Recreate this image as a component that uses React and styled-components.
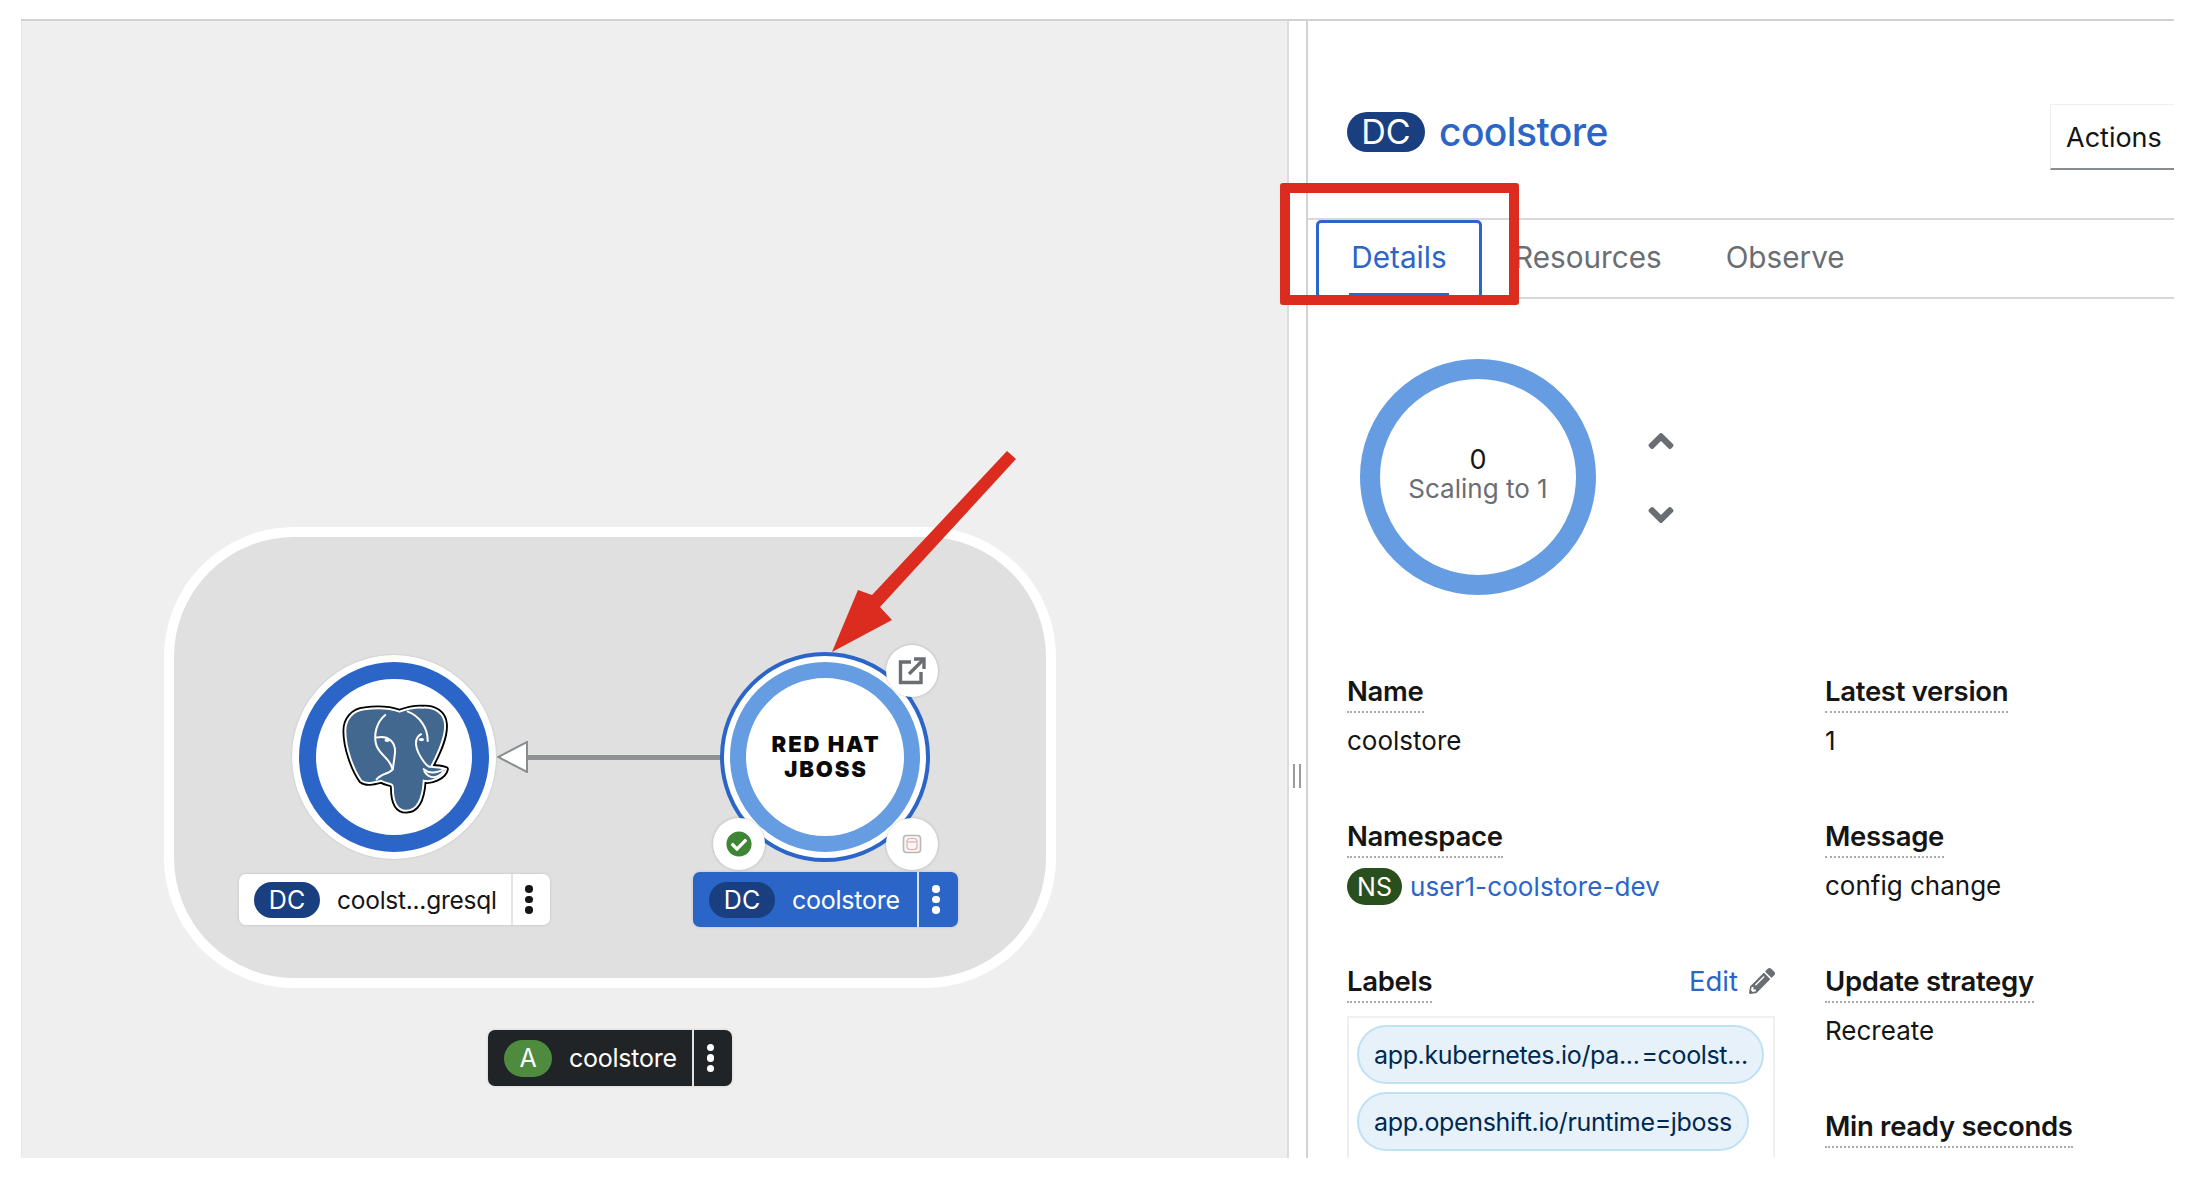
import React from "react";
import styled, { createGlobalStyle } from "styled-components";
import { FaCheckCircle, FaPencilAlt, FaAngleUp, FaAngleDown } from "react-icons/fa";

const Global = createGlobalStyle`
  html, body { margin: 0; padding: 0; background: #fff; }
  body { font-family: "Inter", "Liberation Sans", sans-serif; color: #151515; }
`;

const Page = styled.div`width: 2200px; height: 1186px; padding: 19px 26px 28px 21px; box-sizing: border-box; position: relative; overflow: hidden;`;
const Frame = styled.div`display: flex; height: 1139px; border-top: 2px solid #d2d2d2; overflow: hidden; box-sizing: border-box;`;
const Canvas = styled.div`width: 1268px; flex: none; background: #efefef; position: relative; border-left: 1px solid #e8e8e8; border-right: 2px solid #dcdcdc; box-sizing: border-box;`;
const Group = styled.div`position: absolute; left: 142px; top: 506px; width: 892px; height: 461px; box-sizing: border-box; background: #e0e0e0; border: 10px solid #fff; border-radius: 130px;`;
const NodeCircle = styled.div`position: absolute; border-radius: 50%; box-sizing: border-box; background: #fff; display: flex; align-items: center; justify-content: center; box-shadow: 0 0 2px rgba(0,0,0,.18);`;
const PgNode = styled(NodeCircle)`left: 270px; top: 634px; width: 204px; height: 204px;`;
const PgRing = styled.div`width: 190px; height: 190px; border-radius: 50%; border: 17px solid #2b65c7; box-sizing: border-box; display: flex; align-items: center; justify-content: center;`;
const JbNode = styled(NodeCircle)`left: 698px; top: 631px; width: 210px; height: 210px; border: 4px solid #2b65c7; box-shadow: none;`;
const JbRing = styled.div`width: 190px; height: 190px; border-radius: 50%; border: 16px solid #659ce2; box-sizing: border-box; display: flex; align-items: center; justify-content: center; text-align: center;`;
const JbText = styled.div`font-family: "Inter", sans-serif; font-weight: 900; font-size: 22px; line-height: 25px; letter-spacing: 1.9px; color: #0a0a0a; margin: -1px 0 0 2px;`;
const Decorator = styled.div`position: absolute; left: ${p => p.$x}px; top: ${p => p.$y}px; width: 52px; height: 52px; border-radius: 50%; background: #fff; box-shadow: 0 0 3px rgba(0,0,0,.22); display: flex; align-items: center; justify-content: center;`;
const Edge = styled.div`position: absolute; left: 505px; top: 734px; width: 194px; height: 5px; background: #8f9195;`;
const EdgeHead = styled.svg`position: absolute; left: 475px; top: 720px;`;

const NodeLabel = styled.div`position: absolute; left: ${p => p.$x}px; top: ${p => p.$y}px; width: ${p => p.$w}px; height: ${p => p.$h}px; box-sizing: border-box; display: flex; align-items: center; border-radius: 7px; background: ${p => p.$bg}; color: ${p => p.$fg}; box-shadow: 0 0 3px rgba(0,0,0,.15); overflow: hidden;`;
const Badge = styled.span`flex: none; display: flex; align-items: center; justify-content: center; color: #fff; border-radius: 22px; background: ${p => p.$bg || "#1a3f80"}; width: ${p => p.$w || 66}px; height: ${p => p.$h || 36}px; font-size: ${p => p.$fs || 25}px; margin-left: ${p => p.$ml || 15}px; font-weight: 400;`;
const LabelText = styled.span`flex: 1; font-size: ${p => p.$fs || 25}px; margin-left: 17px; white-space: nowrap; letter-spacing: -0.25px;`;
const Kebab = styled.span`flex: none; width: ${p => p.$w}px; padding-right: 5px; box-sizing: border-box; align-self: stretch; display: flex; flex-direction: column; align-items: center; justify-content: center; gap: 3px; border-left: 2px solid ${p => p.$line};`;
const Dot = styled.i`width: 7.5px; height: 7.5px; border-radius: 50%; background: ${p => p.$c};`;

const Gutter = styled.div`width: 17px; flex: none; position: relative;`;
const Grip = styled.div`position: absolute; left: 4px; top: 743px; width: 8px; height: 24px; box-sizing: border-box; border-left: 2px solid #9b9b9b; border-right: 2px solid #9b9b9b;`;

const Panel = styled.div`flex: 1; border-left: 2px solid #d2d2d2; min-width: 0; overflow: hidden;`;
const Header = styled.div`height: 197px; box-sizing: border-box; padding: 83px 0 0 39px; display: flex; justify-content: space-between; align-items: flex-start;`;
const Title = styled.div`display: flex; align-items: center; margin-top: 4px; gap: 14px;`;
const TitleBadge = styled.span`width: 78px; height: 40px; border-radius: 22px; background: #1a3f80; color: #fff; font-size: 34px; display: flex; align-items: center; justify-content: center;`;
const TitleText = styled.span`font-size: 39px; color: #2b65c7; font-weight: 500; letter-spacing: -0.6px;`;
const Actions = styled.div`width: 124px; height: 66px; box-sizing: border-box; border: 1px solid #efefef; border-bottom: 2px solid #8a8d90; border-right: none; font-size: 27px; padding: 2px 0 0 15px; display: flex; align-items: center;`;
const Tabs = styled.div`height: 81px; box-sizing: border-box; border-top: 2px solid #d8d8d8; border-bottom: 2px solid #d8d8d8; display: flex; padding-left: 8px;`;
const Tab = styled.div`font-size: 29.7px; padding: 0 32px; color: #6a6e73; display: flex; align-items: center; margin-top: -3px;`;
const ActiveTab = styled(Tab)`position: relative; margin-top: 0; color: #2b65c7; width: 166px; box-sizing: border-box; padding: 0 0 5px; justify-content: center; border: 3px solid #2b65c7; border-radius: 5px; margin-bottom: -2px;`;
const TabBar = styled.div`position: absolute; left: 30px; right: 30px; bottom: -1px; height: 4px; background: #2b65c7;`;
const ScaleRow = styled.div`display: flex; align-items: center; height: 374px; padding-left: 52px; box-sizing: border-box;`;
const Donut = styled.div`width: 236px; height: 236px; border-radius: 50%; box-sizing: border-box; border: 20px solid #659ce2; display: flex; flex-direction: column; align-items: center; justify-content: center; margin-top: -18px; padding-bottom: 6px;`;
const DonutNum = styled.div`font-size: 27px; line-height: 29px;`;
const DonutText = styled.div`font-size: 26px; line-height: 29px; color: #6a6e73; white-space: nowrap;`;
const Arrows = styled.div`display: flex; flex-direction: column; align-items: center; margin-left: 45px; gap: 34px; color: #6a6e73; margin-top: -16px;`;

const Columns = styled.div`display: flex; padding-left: 39px;`;
const Column = styled.div`width: ${p => p.$w}px; flex: none;`;
const Item = styled.div`height: 145px;`;
const ItemHead = styled.div`display: flex; justify-content: space-between; align-items: flex-start; width: 428px;`;
const Term = styled.span`display: block; width: fit-content; height: 38px; line-height: 36px; font-size: 27.5px; font-weight: 600; letter-spacing: -0.3px; white-space: nowrap; border-bottom: 2px dotted #aaa;`;
const Value = styled.div`margin-top: 10px; font-size: 26px; line-height: 36px; display: flex; align-items: center; gap: 8px; white-space: nowrap;`;
const NsBadge = styled.span`width: 55px; height: 37px; border-radius: 20px; background: #2a4f1e; color: #fff; font-size: 25px; display: flex; align-items: center; justify-content: center;`;
const Link = styled.span`color: #2b65c7; letter-spacing: 0.1px;`;
const Edit = styled.span`color: #2b65c7; font-size: 27.5px; line-height: 36px; display: flex; align-items: center; gap: 11px;`;
const LabelsBox = styled.div`width: 428px; margin-top: 13px; border: 2px solid #f0f0f0; padding: 7px 8px; height: 300px; box-sizing: border-box; display: flex; flex-direction: column; align-items: flex-start; gap: 8px;`;
const Pill = styled.div`height: 59px; box-sizing: border-box; width: ${p => p.$w}px; border-radius: 30px; background: #e7f1fa; border: 2px solid #bee1f4; color: #002952; font-size: 25px; padding-left: 15px; display: flex; align-items: center; white-space: nowrap; letter-spacing: -0.35px;`;

const RedBox = styled.div`position: absolute; left: 1280px; top: 183px; width: 239px; height: 122px; box-sizing: border-box; border: 10px solid #db2c1f; border-radius: 3px; pointer-events: none;`;
const RedArrow = styled.svg`position: absolute; left: 800px; top: 430px; pointer-events: none;`;

const Dots = ({ c, line, w }) => (
  <Kebab $w={w} $line={line}><Dot $c={c} /><Dot $c={c} /><Dot $c={c} /></Kebab>
);

const BODY = "M250 205C215 208 192 235 192 270C192 320 215 385 240 420C255 432 280 425 300 420C320 432 335 425 335 440C335 470 340 510 375 510C410 510 425 470 428 420C450 425 490 410 495 385C480 378 465 380 450 378C470 340 495 290 492 250C490 215 460 198 425 200C395 198 375 205 355 212C320 200 285 200 250 205Z";

const Elephant = () => (
  <svg width="113" height="113" viewBox="170 180 340 340">
    <path d={BODY} fill="#000" stroke="#000" strokeWidth="17" strokeLinejoin="round" />
    <path d={BODY} fill="#43688f" stroke="#fff" strokeWidth="6" />
    <g fill="none" stroke="#fff" strokeWidth="6" strokeLinecap="round">
      <path d="M312 222C285 245 278 280 284 308C290 340 325 350 333 382" />
      <path d="M380 212C415 225 440 260 440 300" />
      <path d="M420 280C398 292 398 322 430 365C438 375 444 378 446 378" />
      <path d="M286 290C320 282 346 302 341 340C339 360 336 375 335 385" />
      <path d="M335 385C322 402 302 396 286 416" />
      <path d="M428 385C445 400 470 395 490 385" />
      <path d="M430 392C445 415 470 415 488 392" />
    </g>
    <ellipse cx="318" cy="298" rx="8" ry="5" fill="#fff" />
    <ellipse cx="421" cy="296" rx="8" ry="5" fill="#fff" />
  </svg>
);

const ExternalIcon = () => (
  <svg width="30" height="30" viewBox="0 0 30 30" fill="none" stroke="#6a6e73" strokeWidth="3.4">
    <path d="M14 6H3.5V26.5H24V16" />
    <path d="M12 18L26 4" />
    <path d="M17 3H27V13" />
  </svg>
);

const BuildIcon = () => (
  <svg width="20" height="20" viewBox="0 0 20 20" fill="none">
    <rect x="1.5" y="1.5" width="17" height="17" rx="3" stroke="#b8b8b8" strokeWidth="1.6" fill="#f7f7f7" />
    <rect x="5" y="4.5" width="10" height="11" rx="3" stroke="#e6a9a9" strokeWidth="1.2" />
    <path d="M6 8H14" stroke="#e6a9a9" strokeWidth="1.2" />
  </svg>
);

export default function App() {
  return (
    <Page>
      <Global />
      <Frame>
        <Canvas>
          <Group />
          <Edge />
          <EdgeHead width="32" height="32" viewBox="0 0 32 32">
            <path d="M30 1V31L1 16Z" fill="#fff" stroke="#8a8d90" strokeWidth="2" />
          </EdgeHead>
          <PgNode><PgRing><Elephant /></PgRing></PgNode>
          <JbNode><JbRing><JbText>RED HAT<br />JBOSS</JbText></JbRing></JbNode>
          <Decorator $x={864} $y={624}><ExternalIcon /></Decorator>
          <Decorator $x={691} $y={797}><FaCheckCircle size={26} color="#3e8635" /></Decorator>
          <Decorator $x={864} $y={797}><BuildIcon /></Decorator>
          <NodeLabel $x={217} $y={853} $w={311} $h={51} $bg="#fff" $fg="#151515">
            <Badge>DC</Badge>
            <LabelText $fs={24.5}>coolst...gresql</LabelText>
            <Dots c="#151515" line="#e4e4e4" w={39} />
          </NodeLabel>
          <NodeLabel $x={671} $y={851} $w={265} $h={55} $bg="#2b65c7" $fg="#fff">
            <Badge $ml={16}>DC</Badge>
            <LabelText>coolstore</LabelText>
            <Dots c="#fff" line="#d7e4f5" w={41} />
          </NodeLabel>
          <NodeLabel $x={466} $y={1009} $w={244} $h={56} $bg="#212427" $fg="#fff">
            <Badge $bg="#4e8b3f" $w={48} $h={37} $ml={16}>A</Badge>
            <LabelText>coolstore</LabelText>
            <Dots c="#fff" line="#e4e4e4" w={40} />
          </NodeLabel>
        </Canvas>
        <Gutter><Grip /></Gutter>
        <Panel>
          <Header>
            <Title>
              <TitleBadge>DC</TitleBadge>
              <TitleText>coolstore</TitleText>
            </Title>
            <Actions>Actions</Actions>
          </Header>
          <Tabs>
            <ActiveTab>Details<TabBar /></ActiveTab>
            <Tab>Resources</Tab>
            <Tab>Observe</Tab>
          </Tabs>
          <ScaleRow>
            <Donut>
              <DonutNum>0</DonutNum>
              <DonutText>Scaling to 1</DonutText>
            </Donut>
            <Arrows>
              <FaAngleUp size={40} />
              <FaAngleDown size={40} />
            </Arrows>
          </ScaleRow>
          <Columns>
            <Column $w={478}>
              <Item><Term>Name</Term><Value>coolstore</Value></Item>
              <Item><Term>Namespace</Term><Value><NsBadge>NS</NsBadge><Link>user1-coolstore-dev</Link></Value></Item>
              <Item>
                <ItemHead>
                  <Term>Labels</Term>
                  <Edit>Edit <FaPencilAlt size={26} color="#6a6e73" /></Edit>
                </ItemHead>
                <LabelsBox>
                  <Pill $w={407}>app.kubernetes.io/pa...&#8202;=coolst...</Pill>
                  <Pill $w={392}>app.openshift.io/runtime=jboss</Pill>
                </LabelsBox>
              </Item>
            </Column>
            <Column $w={340}>
              <Item><Term>Latest version</Term><Value>1</Value></Item>
              <Item><Term>Message</Term><Value>config change</Value></Item>
              <Item><Term>Update strategy</Term><Value>Recreate</Value></Item>
              <Item><Term>Min ready seconds</Term></Item>
            </Column>
          </Columns>
        </Panel>
      </Frame>
      <RedBox />
      <RedArrow width="220" height="230" viewBox="800 430 220 230">
        <path d="M1016 459L1007 451L872 595L858 590L832 652L892 620L880 607Z" fill="#db2c1f" />
      </RedArrow>
    </Page>
  );
}
